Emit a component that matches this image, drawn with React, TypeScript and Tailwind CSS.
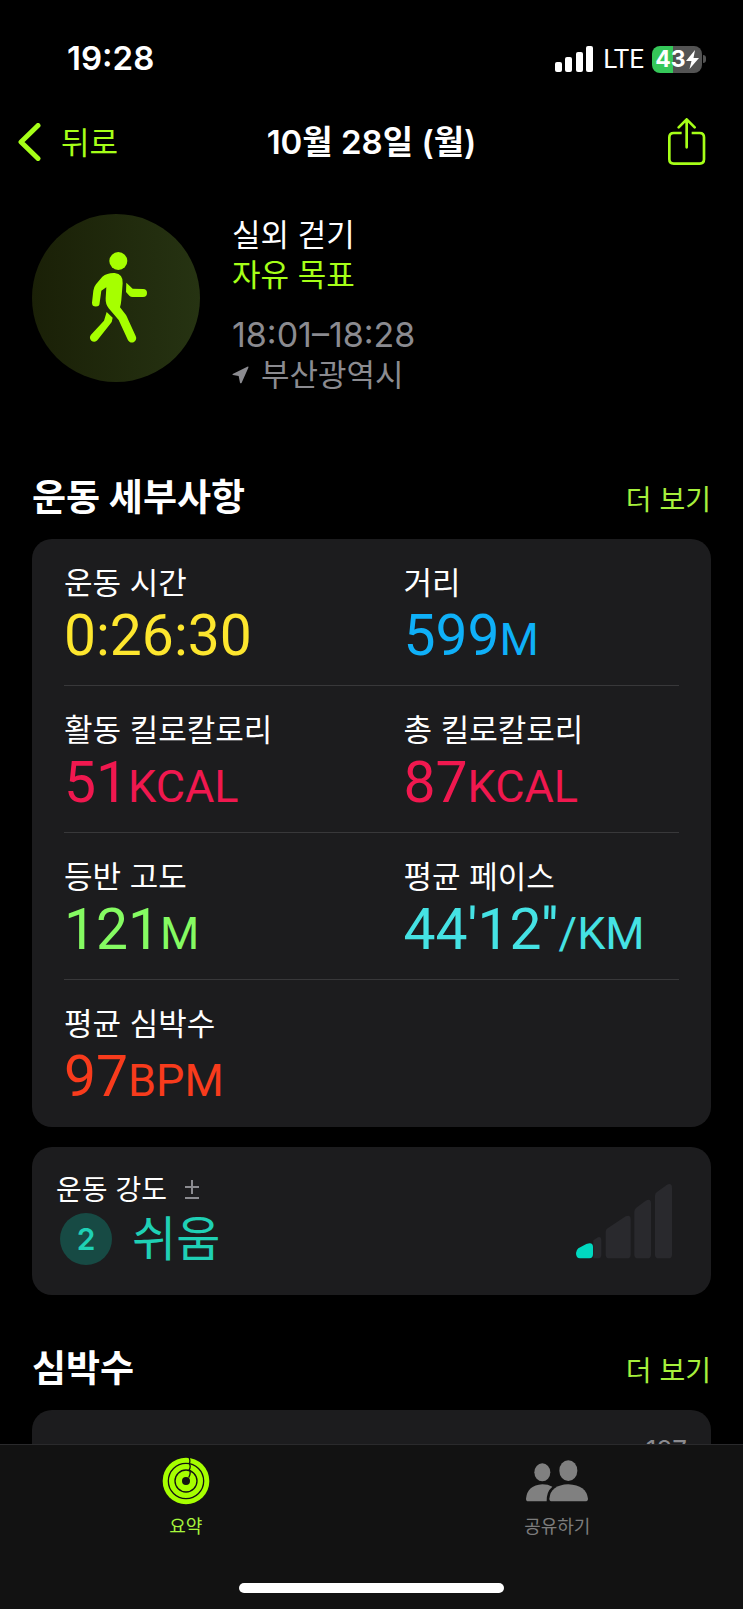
import type { ReactNode } from 'react';

type Metric = {
  label: string;
  value: string;
  unit?: string;
  color: string;
};

const metricRows: Metric[][] = [
  [
    { label: '운동 시간', value: '0:26:30', color: 'text-[#fde62e]' },
    { label: '거리', value: '599', unit: 'M', color: 'text-[#0fb0f8]' },
  ],
  [
    { label: '활동 킬로칼로리', value: '51', unit: 'KCAL', color: 'text-[#f0184f]' },
    { label: '총 킬로칼로리', value: '87', unit: 'KCAL', color: 'text-[#f0184f]' },
  ],
  [
    { label: '등반 고도', value: '121', unit: 'M', color: 'text-[#85fb62]' },
    { label: '평균 페이스', value: "44'12''", unit: '/KM', color: 'text-[#45e2e4]' },
  ],
  [{ label: '평균 심박수', value: '97', unit: 'BPM', color: 'text-[#f83b1c]' }],
];

function StatusBar() {
  return (
    <div className="flex h-[118px] items-center justify-between pl-[67px] pr-[37px]">
      <span className="text-[33px] font-semibold">19:28</span>
      <div className="flex items-center gap-2">
        <svg className="h-[26px] w-[40px]" viewBox="0 0 40 26" fill="currentColor">
          <rect x="0" y="16" width="7" height="10" rx="2" />
          <rect x="10" y="11" width="7" height="15" rx="2" />
          <rect x="21" y="6" width="7" height="20" rx="2" />
          <rect x="31" y="0" width="7" height="26" rx="2" />
        </svg>
        <span className="font-['Roboto',sans-serif] text-[26px] leading-none">LTE</span>
        <div className="flex items-center gap-px">
          <div className="flex h-[27px] w-[50px] items-center justify-center rounded-lg bg-linear-to-r from-[#35c759] from-43% to-[#535353] to-43%">
            <span className="text-[23px] font-bold leading-none">43</span>
            <svg className="h-[19px] w-[13px]" viewBox="0 0 13 19" fill="currentColor">
              <path d="M9 0 0 11h5.500L3.500 19 13 8H7.500Z" />
            </svg>
          </div>
          <div className="h-2 w-[3px] rounded-r-full bg-[#535353]" />
        </div>
      </div>
    </div>
  );
}

function NavBar() {
  return (
    <header className="grid h-12 grid-cols-[1fr_auto_1fr] items-center px-[18px]">
      <button className="flex items-center gap-5 text-[31px] leading-none text-[#a6ff18]">
        <svg className="h-[38px] w-[23px]" viewBox="0 0 23 38" fill="none" stroke="currentColor" strokeWidth="5" strokeLinecap="round" strokeLinejoin="round">
          <path d="M20 2.500 3 19l17 16.500" />
        </svg>
        뒤로
      </button>
      <h1 className="text-[33px] font-semibold leading-none">10월 28일 (월)</h1>
      <button aria-label="공유" className="mr-[18px] justify-self-end text-[#a6ff18]">
        <svg className="h-[48px] w-[40px]" viewBox="412 264 120 144" fill="none" stroke="currentColor" strokeWidth="8" strokeLinecap="round" strokeLinejoin="round">
          <path strokeLinecap="butt" d="M456 309H432Q419 309 419 322V388Q419 401 432 401H510Q523 401 523 388V322Q523 309 510 309H486" />
          <path d="M471 352V269M447 292l24-24 24 24" />
        </svg>
      </button>
    </header>
  );
}

function WorkoutInfo() {
  return (
    <section className="mt-12 flex gap-8">
      <div className="size-42 shrink-0 rounded-full bg-linear-to-r from-[#1a2007] to-[#263312]">
        <svg className="size-full" viewBox="36 42 504 504" fill="#a6ff00">
          <circle cx="295" cy="183" r="27" />
          <path d="M247 230Q262 218 284 219Q310 222 308 250L304 300Q303 312 300 322L318 345Q322 352 325 360L347 408A13 13 0 0 1 324 421L296 360L266 325Q256 312 257 295L259 262L244 272L239 308A11 11 0 0 1 216 308L220 272Q221 262 228 253Z" />
          <path d="M319 248 338 266 369 267A11 11 0 0 1 369 291L338 291Q332 291 328 287L318 276Z" />
          <path d="M260 336 278 353Q277 366 270 373L232 421A12 12 0 0 1 213 404L252 362Z" />
        </svg>
      </div>
      <div className="pt-px text-[31px] leading-10">
        <p>실외 걷기</p>
        <p className="text-[#a6ff18]">자유 목표</p>
        <p className="mt-5 text-[34px] text-[#8b8b90]">18:01–18:28</p>
        <p className="flex items-center gap-3 text-[#8b8b90]">
          <svg className="h-[18px] w-[17px]" viewBox="639 505 51 52" fill="currentColor">
            <path d="M641 528Q639 530 642 531L659 534 663 554Q665 558 668 554L688 509Q690 505 685 506Z" />
          </svg>
          부산광역시
        </p>
      </div>
    </section>
  );
}

function SectionHeader({ title }: { title: string }) {
  return (
    <div className="mb-4 flex h-[50px] items-center justify-between">
      <h2 className="text-[37px] font-bold">{title}</h2>
      <a href="#more" className="pt-1 text-[28px] text-[#a6f03c]">
        더 보기
      </a>
    </div>
  );
}

function MetricCell({ metric }: { metric: Metric }) {
  return (
    <div className="pl-8">
      <dt className="text-[31px] leading-10">{metric.label}</dt>
      <dd className={`mt-1 font-['Roboto',sans-serif] text-[57px] leading-[58px] ${metric.color}`}>
        {metric.value}
        {metric.unit && <span className="text-[45px] leading-none">{metric.unit}</span>}
      </dd>
    </div>
  );
}

function MetricsCard() {
  return (
    <dl className="rounded-[20px] bg-[#1c1c1e] pb-px">
      {metricRows.map((row, i) => (
        <div key={row[0].label}>
          {i > 0 && <div className="mx-8 h-px bg-[#38383a]" />}
          <div className="grid grid-cols-2 pb-5 pt-6">
            {row.map((metric) => (
              <MetricCell key={metric.label} metric={metric} />
            ))}
          </div>
        </div>
      ))}
    </dl>
  );
}

function EffortCard() {
  return (
    <section className="mt-5 flex h-[148px] items-center justify-between rounded-[20px] bg-[#1c1c1e] pl-6 pr-[38px]">
      <div className="pb-1">
        <div className="flex items-center gap-[18px] text-[28px] leading-10">
          <h3>운동 강도</h3>
          <svg className="h-5 w-[14px]" viewBox="0 0 14 20" fill="none" stroke="#8b8b90" strokeWidth="2">
            <path d="M0 7h14M7 0v14M0 18h14" />
          </svg>
        </div>
        <div className="ml-1 flex items-center gap-5 text-[#1fd0b5]">
          <span className="flex size-[52px] items-center justify-center rounded-full bg-[#174a44] text-[30px] font-semibold">2</span>
          <span className="text-[48px] leading-[58px]">쉬움</span>
        </div>
      </div>
      <svg className="h-[76px] w-[98px]" viewBox="45 40 294 228" fill="#29292d">
        <path d="M100 212 114 203Q124 200 124 210V255Q124 266 114 266H100Z" />
        <path d="M137 187Q137 180 143 176L197 140Q212 134 212 149V255Q212 266 201 266H148Q137 266 137 255Z" />
        <path d="M223 126Q223 119 229 114L257 93Q273 85 273 101V255Q273 266 262 266H234Q223 266 223 255Z" />
        <path d="M285 78Q285 71 291 67L321 45Q336 39 336 54V255Q336 266 325 266H296Q285 266 285 255Z" />
        <path fill="#00d9c0" d="M48 250Q48 242 55 236L79 223Q99 215 99 232V254Q99 266 88 266H60Q48 266 48 250Z" />
      </svg>
    </section>
  );
}

function Tab({ label, color, children }: { label: string; color: string; children: ReactNode }) {
  return (
    <button className={`flex flex-col items-center gap-2 text-lg ${color}`}>
      {children}
      {label}
    </button>
  );
}

function TabBar() {
  return (
    <footer className="shrink-0 border-t border-[#2a2a2c] bg-[#121212] pb-4 pt-3">
      <nav className="grid grid-cols-2">
        <Tab label="요약" color="text-[#a6f53c]">
          <svg className="size-12" viewBox="67 52 144 144">
            <circle cx="139" cy="124" r="70" fill="#a6ff00" />
            <g fill="none" stroke="#121212" strokeWidth="4">
              <circle cx="139" cy="124" r="53" />
              <circle cx="139" cy="124" r="33" />
              <path d="M147 52Q153 61 149 72Q154 80 149 90Q155 100 147 114" />
            </g>
            <circle cx="139" cy="124" r="12" fill="#121212" />
          </svg>
        </Tab>
        <Tab label="공유하기" color="text-[#7c7c7c]">
          <svg className="h-12 w-[64px]" viewBox="76 52 192 144" fill="#808080">
            <ellipse cx="128" cy="98" rx="24" ry="27" />
            <ellipse cx="206" cy="93" rx="27" ry="31" />
            <path d="M79 177Q83 137 128 134Q145 134 158 141Q140 156 141 185H86Q79 185 79 177Z" />
            <path d="M149 177Q153 136 206 134Q260 137 265 177Q265 185 256 185H157Q149 185 149 177Z" />
          </svg>
        </Tab>
      </nav>
      <div className="mx-auto mt-[42px] h-[10px] w-[265px] rounded-full bg-white" />
    </footer>
  );
}

export default function App() {
  return (
    <div className="flex h-screen flex-col bg-black font-['Inter','Noto_Sans_CJK_KR',sans-serif] text-white">
      <div className="min-h-0 flex-1 overflow-hidden">
        <StatusBar />
        <NavBar />
        <main className="px-8">
          <WorkoutInfo />
          <div className="mt-[78px]">
            <SectionHeader title="운동 세부사항" />
            <MetricsCard />
            <EffortCard />
          </div>
          <div className="mt-[49px]">
            <SectionHeader title="심박수" />
            <section className="h-[300px] rounded-[20px] bg-[#1c1c1e] px-6 pt-5 text-right text-[26px] text-[#8b8b90]">
              127
            </section>
          </div>
        </main>
      </div>
      <TabBar />
    </div>
  );
}
